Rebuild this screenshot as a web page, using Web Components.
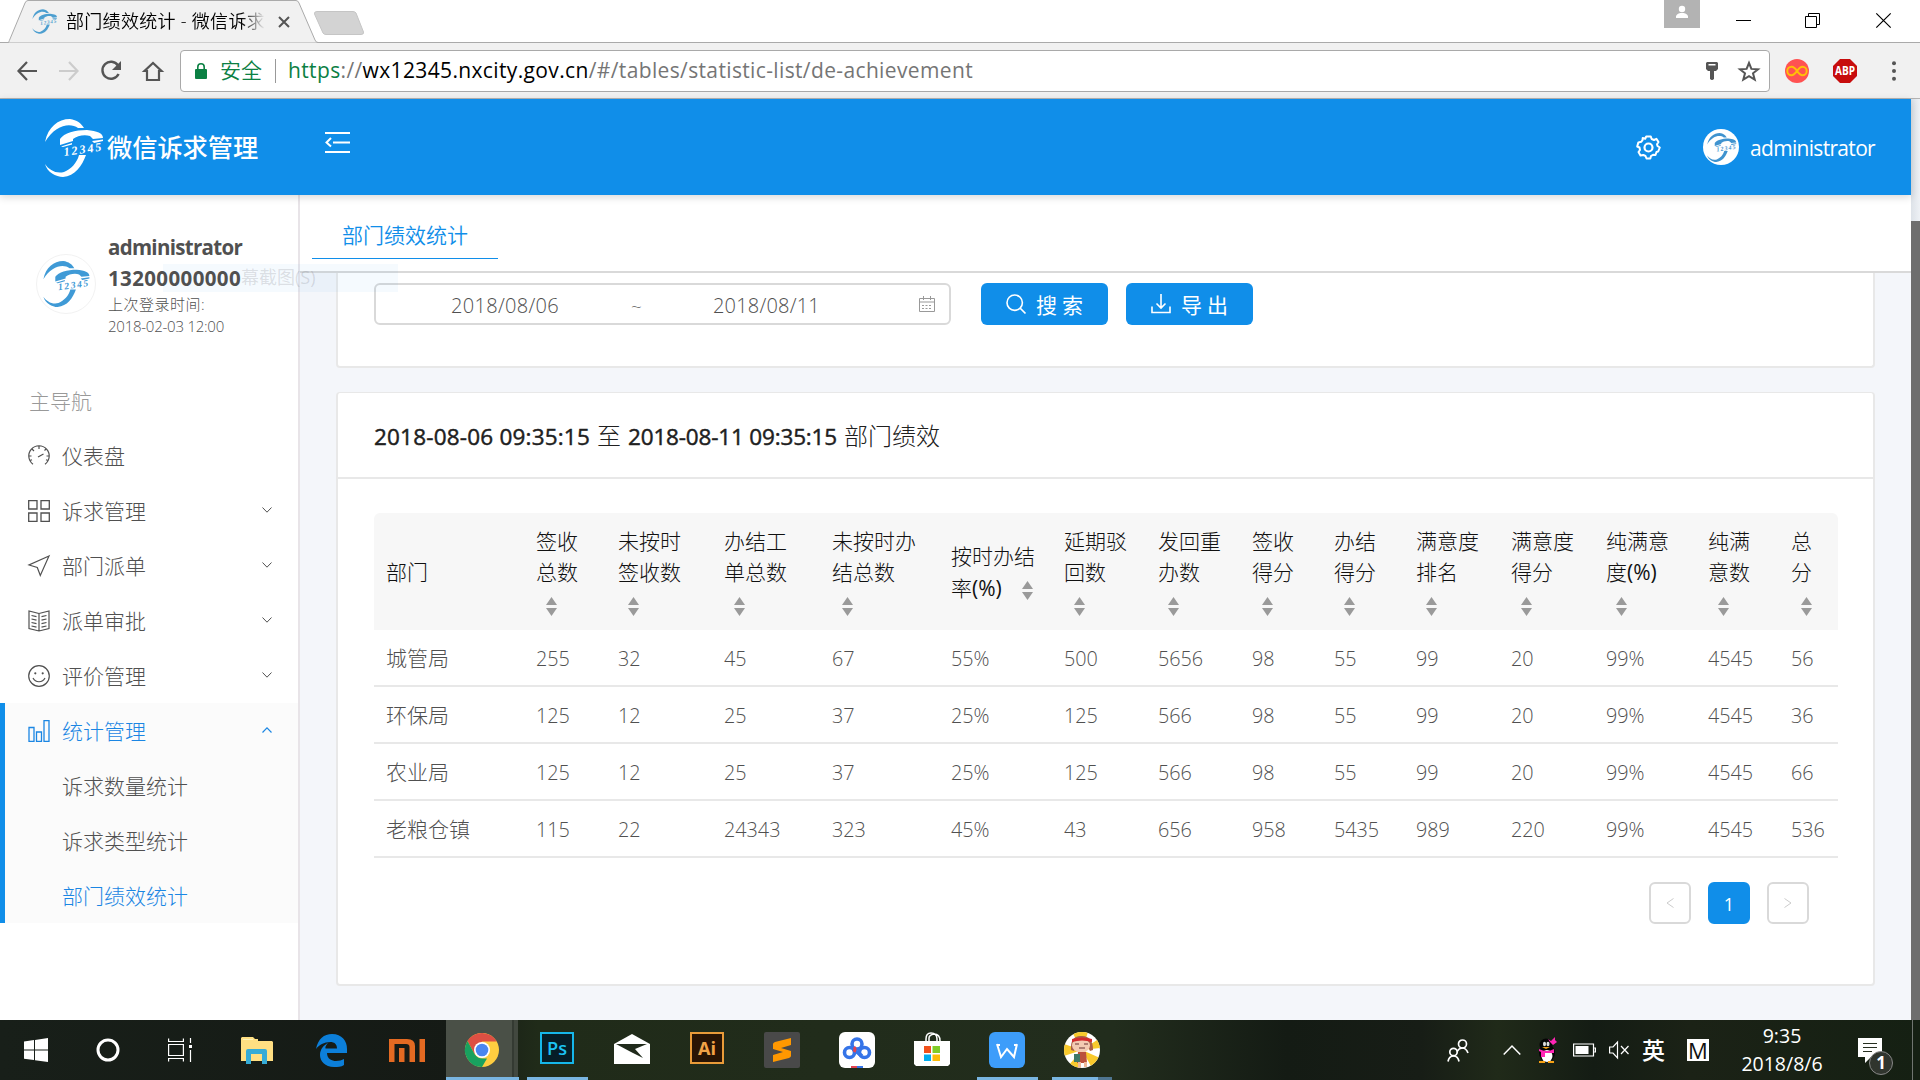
<!DOCTYPE html>
<html lang="zh-CN">
<head>
<meta charset="utf-8">
<title>部门绩效统计 - 微信诉求管理</title>
<style>
html,body{margin:0;padding:0;width:1920px;height:1080px;overflow:hidden;background:#fff}
body{font-family:"Open Sans","Noto Sans CJK SC",sans-serif;font-size:21px;color:#505050}
</style>
</head>
<body>
<desktop-screen></desktop-screen>
<script>
const def=(name,html,init)=>{
  const t=document.createElement('template');t.innerHTML=html;
  customElements.define(name,class extends HTMLElement{
    constructor(){super();this.attachShadow({mode:'open'}).append(t.content.cloneNode(true));}
    connectedCallback(){if(init&&!this.ready){this.ready=true;init.call(this,this.shadowRoot);}}
  });
};
const LOGO='<path fill="currentColor" d="M1 23C4 8 14 0 26 0C33 1 37 4 40 9H34C26 3 11 6 1 23zM16 26V20C20 14 31 11 43 11C53 12 59 14 59 19L49 20L46 17C40 15 33 17 29 20V22zM48 22L59 20.500V22L50 24zM17 27.500L28 24V25.500L19 28zM1 45C3 53 12 58 19 58C31 57 38 47 42 36H35C33 44 27 50 20 53C12 55 5 51 1 45z"/><text transform="rotate(-8 20 36)" x="20" y="37" textLength="38" fill="currentColor" font-family="Liberation Serif,serif" font-style="italic" font-weight="700" font-size="12">12345</text>';
/* each entry: [viewBox, markup] */
const S='fill="none" stroke="currentColor" ';
const ICONS={
logo:['0 0 59 58',LOGO],
back:['0 0 20 20','<path '+S+'stroke-width="2.200" d="M20 10H2M10 1L1.500 10L10 19"/>'],
fwd:['0 0 20 20','<path '+S+'stroke-width="2.200" d="M0 10H18M10 1L18.500 10L10 19"/>'],
reload:['0 0 22 20','<path '+S+'stroke-width="2.400" d="M18 4.500A8.500 8.500 0 1 0 18.600 13"/><path fill="currentColor" d="M21 0V9H12z"/>'],
home:['0 0 20 20','<path '+S+'stroke-width="2.200" d="M4 19V10H1.500L10 2L18.500 10H16V19z"/>'],
lock:['0 0 12 16','<rect y="6" width="12" height="10" rx="1" fill="currentColor"/><path '+S+'stroke-width="1.600" d="M2.800 7V4a3.200 3.200 0 0 1 6.400 0V7"/>'],
key:['0 0 12 18','<path fill="currentColor" fill-rule="evenodd" d="M1 0H11L12 1V7L10 9H8V17L6.500 18H5.500L4 17V9H2L0 7V1zM2.500 2V3.500H9.500V2z"/>'],
star:['0 0 22 20','<path '+S+'stroke-width="2" d="M11 2L13.400 7.900L20 8.300L15 12.300L16.700 18.500L11 15.100L5.300 18.500L7 12.300L2 8.300L8.600 7.900z"/>'],
inf:['0 0 24 24','<circle cx="12" cy="12" r="12" fill="#ff5252"/><path fill="none" stroke="#ffc107" stroke-width="2" d="M12 12C9 7.500 7.500 7.800 6.500 7.800a4.200 4.200 0 0 0 0 8.400C9 16.200 10.500 14 12 12S15 7.800 17.500 7.800a4.200 4.200 0 0 1 0 8.400C15 16.200 13.500 14 12 12z"/>'],
abp:['0 0 24 24','<path fill="#c70d0d" d="M7 0H17L24 7V17L17 24H7L0 17V7z"/><text x="2" y="16.200" textLength="20" lengthAdjust="spacingAndGlyphs" font-size="12" font-weight="700" font-family="Open Sans,sans-serif" fill="#fff">ABP</text>'],
dots:['0 0 4 20','<g fill="currentColor"><circle cx="2" cy="2.300" r="2"/><circle cx="2" cy="10" r="2"/><circle cx="2" cy="17.700" r="2"/></g>'],
user:['0 0 36 28','<circle cx="18" cy="9" r="3.200" fill="#fff"/><path fill="#fff" d="M12 18V16C13 13.500 16 13 18 13S23 13.500 24 16V18z"/>'],
x:['0 0 12 12','<path '+S+'stroke-width="2" d="M1 1L11 11M11 1L1 11"/>'],
wmin:['0 0 15 15','<path '+S+'d="M0 7.500H15"/>'],
wmax:['0 0 15 15','<path '+S+'d="M.5 3.500H11.500V14.500H.5zM3.500 3V.5H14.500V11.500H12"/>'],
wclose:['0 0 15 15','<path '+S+'stroke-width="1.200" d="M.3 .3L14.700 14.700M14.700 .3L.3 14.700"/>'],
fold:['0 0 25 21','<path '+S+'stroke-width="2" d="M0 1H25M8 10.500H25M0 20H25M6 6L1.500 10.500L6 14.500"/>'],
gear:['0 0 25 25','<path '+S+'stroke-width="2" stroke-linejoin="round" d="M10.200 1.500H14.800L15.600 4L18 5L20.400 3.900L22.500 7L21 9.200L21.500 11L23.800 12.500L22.200 16.500L20.500 17L19.500 20L17 19.800L15 21L14.300 23.500H10.500L9.500 21L7.300 19.900L4.500 20.500L2.500 17L4 15L3.500 12.500L1.200 11.500L2.400 7.400L5.200 6.800L6.500 5.200L6.700 3L9.200 3.800z"/><circle cx="12.500" cy="12.500" r="4" '+S+'stroke-width="2.200"/>'],
dash:['0 0 22 22','<path '+S+'stroke-width="1.200" d="M5 19.200A10.200 10.200 0 1 1 17 19.200M11 1V4M1 11H3.500M21 11H18.500M4 4L6 6M18 4L16.500 5.500M10 12L15.500 9M2 15.500L4 14.700M20 15.500L18 14.700"/>'],
grid:['0 0 22 22','<path '+S+'stroke-width="1.300" d="M.7 .7H9V9H.7zM13 .7H21.300V9H13zM.7 13H9V21.300H.7zM13 13H21.300V21.300H13z"/>'],
send:['0 0 22 22','<path '+S+'stroke-width="1.200" d="M21 1L1 10L9.300 12.500L12.300 20.500z"/>'],
book:['0 0 22 22','<path '+S+'stroke-width="1.200" d="M11 3.500L1 1V18.500L11 21L21 18.500V1zM11 3.500V21M3.500 5.500L8.500 6.700M3.500 9L8.500 10.200M3.500 12.500L8.500 13.700M18.500 5.500L13.500 6.700M18.500 9L13.500 10.200M18.500 12.500L13.500 13.700M3.500 16L8.500 17.200M18.500 16L13.500 17.200"/>'],
smile:['0 0 22 22','<circle cx="11" cy="11" r="10.300" '+S+'stroke-width="1.200"/><circle cx="7.300" cy="8.300" r="1.100" fill="currentColor"/><circle cx="14.700" cy="8.300" r="1.100" fill="currentColor"/><path '+S+'stroke-width="1.200" d="M5 13C7.500 18 14.500 18 17 13"/>'],
bars:['0 0 22 22','<path '+S+'stroke-width="1.300" d="M1 7.500H6V21.300H1zM8.500 12H13.500V21.300H8.500zM16 .7H21V21.300H16z"/>'],
down:['0 0 10 6','<path '+S+'stroke-width="1" d="M.5 .5L5 5.200L9.500 .5"/>'],
up:['0 0 10 6','<path '+S+'stroke-width="1.200" d="M.5 5.500L5 .8L9.500 5.500"/>'],
left:['0 0 8 10','<path '+S+'d="M7.500 .5L1 5L7.500 9.500"/>'],
right:['0 0 8 10','<path '+S+'d="M.5 .5L7 5L.5 9.500"/>'],
cal:['0 0 16 16','<path '+S+'d="M.5 2.500H15.500V15.500H.5zM.5 6H15.500M4.500 0V4M11.500 0V4"/><path '+S+'stroke-dasharray="2 1.500" d="M3 9.500H13M3 12.500H13"/>'],
search:['0 0 20 20','<circle cx="8.700" cy="8.700" r="7.700" '+S+'stroke-width="1.600"/><path '+S+'stroke-width="1.700" d="M14 14L19.500 19.500"/>'],
dl:['0 0 20 20','<path '+S+'stroke-width="1.600" d="M10 0V14M5.500 9.500L10 14L14.500 9.500M1 12.500V18.500H19V12.500"/>'],
sort:['0 0 11 21','<path fill="#9a9a9a" d="M5.500 1L11 9H0zM5.500 20L11 12H0z"/>'],
win:['0 0 24 24','<path fill="#fff" d="M0 3.500L10 2V11.500H0zM11 1.900L24 0V11.500H11zM0 12.500H10V22L0 20.700zM11 12.500H24V24L11 22.200z"/>'],
cort:['0 0 24 24','<circle cx="12" cy="12" r="10" fill="none" stroke="#fff" stroke-width="3"/>'],
task:['0 0 24 24','<path fill="none" stroke="#fff" stroke-width="1.200" d="M.6 .5V3.500H15.400V.5M.6 6.500H15.400V17.500H.6zM.6 23.500V20.500H15.400V23.500M22.500 0V5M22.500 12V24"/><path fill="#fff" d="M21 7H24V10H21z"/>'],
folder:['0 0 32 28','<path fill="#ffdf82" d="M1 1H12L14 3H17V5H31L32 6V25H0V2z"/><path fill="#fff3b8" d="M2 3H12V4H2z"/><path fill="#35abd6" d="M5 15Q5 13 7 13H24Q26 13 26 15V28H21V18H10V28H5z"/>'],
edge:['0 0 31 33','<path fill="#0c7fd9" d="M0 15C2 5 8 0 16 0C26 0 31 7 31 15V19H11C11 25 16 27 20 27C23 27 26 26 28 25V31C25 33 22 33 18 33C9 33 4 27 4 21C4 15 8 11 12 9C10 11 9 13 9.500 14.500H21C21 10 18 8 14.500 8C8 8 3 11 0 15z"/>'],
mi:['0 0 36 23','<path fill="#e46a22" d="M0 0H18Q26 0 26 7V23H20.500V8Q20.500 5 17 5H5.500V23H0zM10 9H15.500V23H10zM30.500 0H36V23H30.500z"/>'],
chrome:['0 0 34 34','<circle cx="17" cy="17" r="17" fill="#ffcd40"/><path fill="#dd4f43" d="M2.500 8A17 17 0 0 1 31.700 8.500H17L9.600 21z"/><path fill="#19a15f" d="M2.500 8L9.700 21.300Q12.500 25.500 17.500 25.500H22L17 34A17 17 0 0 1 2.500 8z"/><circle cx="17" cy="17" r="8" fill="#fff"/><circle cx="17" cy="17" r="6.300" fill="#4a86f0"/>'],
ps:['0 0 34 32','<path fill="#061e28" stroke="#16b7ea" stroke-width="2" d="M1 1H33V31H1z"/><text x="7" y="22.500" font-size="18" textLength="20" lengthAdjust="spacingAndGlyphs" font-family="Open Sans,sans-serif" font-weight="600" fill="#1cc3f3">Ps</text>'],
mail:['0 0 36 30','<path fill="#fff" d="M0 10L18 0L36 10V30H0z"/><path fill="#202a1b" d="M2 10H33L21 15L29 24L17 18z"/>'],
ai:['0 0 34 32','<path fill="#291404" stroke="#e99b39" stroke-width="2" d="M1 1H33V31H1z"/><text x="8" y="22.500" font-size="18" textLength="18" lengthAdjust="spacingAndGlyphs" font-family="Open Sans,sans-serif" font-weight="700" fill="#f2a347">Ai</text>'],
sub:['0 0 36 36','<rect width="36" height="36" rx="2" fill="#494949"/><path fill="#ff9800" d="M9 12Q9 11 11 10L27 6V13L17 16L27 19V24Q27 25 25 26L9 30V23L19 20L9 17z"/>'],
baidu:['0 0 36 36','<rect width="36" height="36" rx="6" fill="#fff"/><g fill="none" stroke="#3574e8" stroke-width="3.600"><circle cx="18" cy="12" r="5"/><circle cx="10.500" cy="20.500" r="5"/><circle cx="25.500" cy="20.500" r="5"/><path d="M14 17L23 24"/></g><path fill="none" stroke="#e34350" stroke-width="3" d="M15 15Q17 17 15 20"/><path fill="#e34350" d="M12 34H18V36H12z"/><path fill="#3574e8" d="M18 34H24V36H18z"/>'],
store:['0 0 36 34','<path fill="none" stroke="#fff" stroke-width="1.500" d="M12 10V7Q12 1 17 1Q23 1 23 7V10M15 9V6Q15 3 20 2Q26 2 26 9"/><path fill="#fff" d="M0 9H36V32L34 34H2L0 32z"/><path fill="#f1511b" d="M10 14H17V21H10z"/><path fill="#80cc28" d="M18.500 14H26V21H18.500z"/><path fill="#00adef" d="M10 22.500H17V29H10z"/><path fill="#fbbc09" d="M18.500 22.500H26V29H18.500z"/>'],
wps:['0 0 36 36','<rect width="36" height="36" rx="6" fill="#3d9dfa"/><path fill="none" stroke="#fff" stroke-width="2" d="M8 12L12 25L18 17L25 25L28 12M8 13H11M25 13H28"/>'],
girl:['0 0 36 36','<clipPath id="c"><circle cx="18" cy="18" r="18"/></clipPath><g clip-path="url(#c)"><path fill="#fff" d="M0 0H36V36H0z"/><path fill="#f8c92c" d="M18 18L8 0H24zM18 18L36 6V16zM18 18L36 26L28 36zM18 18L16 36L4 34zM18 18L0 24V12z"/><path fill="#aa6048" d="M7 18Q6 3 18 4Q29 4 29 18L26 19L24 15H12L10 19z"/><ellipse cx="17" cy="13.500" rx="9" ry="7" fill="#f3cbb2"/><path fill="#d42b2d" d="M8 7Q18 4 28 7V10Q18 7 8 10z"/><path fill="none" stroke="#6b3434" d="M11 12H15M20 12H24M15 16H21"/><path fill="#ba513d" d="M14 20H22L23 31H13z"/><path fill="#3e7868" d="M10 22H16V30H10z"/><path fill="#efb999" d="M14 30H17V36H14zM20 30H23V35H20z"/></g>'],
people:['0 0 22 23','<g fill="none" stroke="#fff" stroke-width="1.700"><circle cx="15.500" cy="5" r="4"/><circle cx="6.500" cy="13" r="3.700"/><path d="M1 22.500Q2 17 6.500 17T12 22.500M10 12.500Q12 9 15.500 9T21 14"/></g>'],
caret:['0 0 18 10','<path fill="none" stroke="#fff" stroke-width="1.500" d="M.7 9.500L9 1L17.300 9.500"/>'],
qq:['0 0 20 26','<ellipse cx="10" cy="16" rx="8" ry="9" fill="#050505"/><circle cx="9" cy="8" r="6.500" fill="#050505"/><ellipse cx="10" cy="19" rx="5.500" ry="6" fill="#fff"/><path fill="#ff25b5" d="M2 12Q10 16 17 12V16H8V20H4V15L2 14zM11 2L14 4L18 0V3L20 5L16 8L13 5z"/><ellipse cx="7.500" cy="7" rx="1.500" ry="2.200" fill="#ddd"/><ellipse cx="11" cy="7" rx="1.500" ry="2.200" fill="#ddd"/><path fill="#f5a014" d="M5 10H13L9 12zM2 24H8V26H2zM11 24H17V26H11z"/>'],
bat:['0 0 23 14','<path fill="none" stroke="#fff" stroke-width="1.200" d="M.6 1H20.500V13H.6zM21.200 5H22.400V9H21.200"/><path fill="#fff" d="M2.500 3H15.500V11H2.500z"/>'],
mute:['0 0 20 18','<path fill="none" stroke="#fff" stroke-width="1.200" d="M.6 6H4L8.500 1V17L4 12H.6zM12 5L19.500 13M19.500 5L12 13"/>'],
note:['0 0 24 25','<path fill="#fff" d="M0 0H24V19H13L7 25V19H0z"/><path stroke="#273021" d="M5 5.500H19M5 9.500H19M5 13.500H14"/>']
};
def('ui-icon','<style>:host{display:block;flex:none;line-height:0}svg{display:block;width:100%;height:100%;overflow:visible}</style><svg></svg>',function(r){
  const i=ICONS[this.getAttribute('name')],s=r.querySelector('svg');
  s.setAttribute('viewBox',i[0]);s.innerHTML=i[1];
  this.style.width=(this.getAttribute('w')||i[0].split(' ')[2])+'px';
  this.style.height=(this.getAttribute('h')||i[0].split(' ')[3])+'px';
});
/* single-line label tracked to a given width */
def('fit-text','<style>:host{display:block;flex:none;white-space:pre}span{display:inline-block}</style><span><slot></slot></span>',function(r){
  const w=+this.getAttribute('w'),s=r.querySelector('span');
  if(!w)return;
  const n=[...this.textContent].length,nat=s.getBoundingClientRect().width;
  s.style.letterSpacing=((w-nat)/n)+'px';this.style.width=w+'px';
});
def('browser-tabs',`<style>
:host{display:flex;height:42px;background:#fff;border-bottom:1px solid #aaa;flex:none;box-sizing:content-box;position:relative;color:#000}
.tab{margin-left:8px;width:310px;height:43px;flex:none;margin-bottom:-1px;display:grid}
.tab>*{grid-area:1/1}
.in{display:flex;align-items:center;padding:0 0 0 24px;font-size:18px;height:43px}
.ttl{width:198px;margin-left:9px;overflow:hidden;-webkit-mask-image:linear-gradient(90deg,#000 88%,transparent);mask-image:linear-gradient(90deg,#000 88%,transparent);line-height:30px;margin-top:-1px;font-weight:350}
.in .x{margin-left:13px;color:#555}
.sp{flex:1}.new{margin:11px 0 0 -4px}
.w{display:flex}.w ui-icon{margin-top:13px}
</style><div class="tab"><svg width="310" height="43"><path fill="#f1f1f1" stroke="#aaa" d="M0 42.500C1 42.500 1 41 2 39L17 3Q18 .5 20 .5H288Q290 .5 291 3L307 40Q308 42.500 310 42.500"/></svg>
<div class="in"><ui-icon name="logo" w="25" h="25" style="color:#4d9fd0"></ui-icon><fit-text class="ttl" w="199">部门绩效统计 - 微信诉求</fit-text><ui-icon class="x" name="x" w="12" h="12"></ui-icon></div></div>
<svg class="new" width="50" height="24"><path fill="#d3d3d3" stroke="#c5c5c5" d="M3 .5H39Q41 .5 42 2L49.500 21Q50 23.500 47 23.500H12Q10 23.500 9 22L.5 3Q0 .5 3 .5z"/></svg>
<div class="sp"></div><ui-icon name="user" style="background:#b3b3b3"></ui-icon>
<div class="w"><ui-icon name="wmin" style="margin-left:36px"></ui-icon><ui-icon name="wmax" style="margin-left:54px"></ui-icon><ui-icon name="wclose" style="margin:13px 29px 0 56px"></ui-icon></div>`);
def('browser-bar',`<style>
:host{display:flex;align-items:center;height:55px;background:#f1f1f1;border-bottom:1px solid #b3b3b3;flex:none;color:#555;padding:0}
.box{margin-left:17px;width:1588px;height:40px;border:1px solid #a9a9a9;border-radius:4px;background:#fff;display:flex;align-items:center;font-size:21px}
.sec{color:#0b8043;margin-left:14px}.d{width:1px;height:24px;background:#999;margin:0 12px 0 13px}
b{font-weight:400;color:#000}i{font-style:normal;color:#0b8043}.sp{flex:1}fit-text{line-height:30px;margin-top:-2px}
</style><ui-icon name="back" style="margin-left:17px"></ui-icon><ui-icon name="fwd" style="margin-left:22px;color:#ccc"></ui-icon><ui-icon name="reload" style="margin-left:21px"></ui-icon><ui-icon name="home" style="margin-left:21px"></ui-icon>
<div class="box"><ui-icon name="lock" class="sec"></ui-icon><fit-text style="color:#0b8043;margin-left:13px;width:42px;font-weight:350">安全</fit-text><div class="d"></div><fit-text w="685" style="color:#757575"><i>https</i>://<b>wx12345.nxcity.gov.cn</b>/#/tables/statistic-list/de-achievement</fit-text><div class="sp"></div><ui-icon name="key"></ui-icon><ui-icon name="star" style="margin:0 9px 0 20px"></ui-icon></div>
<ui-icon name="inf" style="margin-left:15px"></ui-icon><ui-icon name="abp" style="margin-left:24px"></ui-icon><ui-icon name="dots" style="margin-left:35px"></ui-icon>`);
def('app-header',`<style>
:host{display:flex;align-items:center;height:96px;background:#108ee9;color:#fff;flex:none;box-shadow:0 2px 8px rgba(0,0,0,.16);position:relative;z-index:2}
.t{font-size:25.200px;font-weight:500;margin:-2px 0 0 4px;width:152px}.sp{flex:1}
.av{width:36px;height:36px;border-radius:50%;background:#fff;display:flex;align-items:center;justify-content:center;color:#3f93cf;margin:0 12px 0 42px}
</style><ui-icon name="logo" style="margin:2px 0 0 44px"></ui-icon><fit-text class="t">微信诉求管理</fit-text><ui-icon name="fold" style="margin:-9px 0 0 66px"></ui-icon><div class="sp"></div>
<ui-icon name="gear"></ui-icon><div class="av"><ui-icon name="logo" w="31" h="29"></ui-icon></div><fit-text w="125" style="margin:2px 36px 0 -1px;font-size:21px">administrator</fit-text>`);
def('user-card',`<style>
:host{display:flex;height:180px;box-sizing:border-box;padding:37px 0 0 36px}
.av{width:58px;height:58px;border:1px solid #f2f2f2;border-radius:50%;display:flex;align-items:center;justify-content:center;color:#3f9ad6;margin-top:22px}
.c{margin-left:12px;position:relative;z-index:3}.n{font-weight:700;line-height:31px;font-size:20.500px}.s{line-height:22px;font-size:15px;font-weight:300;margin-top:-1px}.s+.s{margin-top:0}
</style><div class="av"><ui-icon name="logo" w="48" h="46"></ui-icon></div><div class="c"><fit-text class="n" w="134">administrator</fit-text><fit-text class="n" w="133">13200000000</fit-text><div class="s"><fit-text w="97">上次登录时间:</fit-text></div><div class="s"><fit-text w="116">2018-02-03 12:00</fit-text></div></div>`);
def('nav-item',`<style>
:host{display:flex;align-items:center;height:55px;padding-left:28px;box-sizing:border-box;font-weight:300}
:host([active]){color:#1b86e3}:host([open]){padding-left:23px}:host([sub]){padding-left:57px}
.t{flex:1;margin-left:12px;line-height:32px}:host([sub]) .t{margin-left:0}
.a{margin:-2px 26px 0 0}
</style><span class="i"></span><div class="t"><slot></slot></div><span class="k"></span>`,function(r){
  const i=this.getAttribute('icon'),a=this.getAttribute('arrow');
  if(i)r.querySelector('.i').innerHTML='<ui-icon name="'+i+'"></ui-icon>';
  if(a)r.querySelector('.k').innerHTML='<ui-icon class="a" name="'+a+'"></ui-icon>';
});
def('side-bar',`<style>
:host{display:flex;flex-direction:column;width:298px;border-right:2px solid #e8e4e8;background:#fff;flex:none}
.h{color:#999;font-weight:300;height:55px;line-height:53px;padding-left:29px;margin-bottom:-2px}
.g{border-left:5px solid #108ee9;background:#fbfbfb}
</style><user-card></user-card><div class="h">主导航</div>
<nav-item icon="dash">仪表盘</nav-item><nav-item icon="grid" arrow="down">诉求管理</nav-item><nav-item icon="send" arrow="down">部门派单</nav-item><nav-item icon="book" arrow="down">派单审批</nav-item><nav-item icon="smile" arrow="down">评价管理</nav-item>
<div class="g"><nav-item open active icon="bars" arrow="up">统计管理</nav-item><nav-item sub>诉求数量统计</nav-item><nav-item sub>诉求类型统计</nav-item><nav-item sub active>部门绩效统计</nav-item></div>`);
def('page-tabs',`<style>:host{display:flex;height:76px;border-bottom:2px solid #d9d9d9;background:#fff;padding-left:12px;flex:none}
div{width:186px;height:63px;border-bottom:1px solid #108ee9;color:#108ee9;line-height:80px;text-align:center;box-sizing:content-box;padding-left:0;font-weight:350}</style><div>部门绩效统计</div>`);
def('date-range',`<style>:host{display:flex;align-items:center;width:573px;height:38px;border:2px solid #d9d9d9;border-radius:6px;background:#fff;font-size:20px;font-weight:300}
fit-text{line-height:30px;padding-top:4px}</style><fit-text w="108" style="margin-left:75px">2018/08/06</fit-text><fit-text w="12" style="margin-left:72px;color:#777;font-size:19px">~</fit-text><fit-text w="107" style="margin-left:70px">2018/08/11</fit-text><ui-icon name="cal" style="margin-left:99px;color:#999"></ui-icon>`);
def('ui-button',`<style>:host{display:flex;align-items:center;width:127px;height:42px;border-radius:6px;background:#108ee9;color:#fff;box-sizing:border-box;padding-left:25px;flex:none}
span{letter-spacing:5px;margin-left:10px;padding-top:1px;line-height:30px}</style><i></i><span><slot></slot></span>`,function(r){
  const u=document.createElement('ui-icon');u.setAttribute('name',this.getAttribute('icon'));r.querySelector('i').replaceWith(u);
});
def('filter-card',`<style>:host{display:flex;align-items:flex-start;height:95px;box-sizing:border-box;padding:10px 0 0 36px;background:#fff;border:2px solid #e8e8e8;border-top:0;border-radius:0 0 4px 4px;width:1539px;flex:none}
</style><date-range></date-range><ui-button icon="search" style="margin-left:30px">搜索</ui-button><ui-button icon="dl" style="margin-left:18px">导出</ui-button>`);
const W=[150,82,106,108,119,113,94,94,82,82,95,95,102,83,59];
const H=['部门','签收|总数','未按时|签收数','办结工|单总数','未按时办|结总数','按时办结|率(%)','延期驳|回数','发回重|办数','签收|得分','办结|得分','满意度|排名','满意度|得分','纯满意|度(%)','纯满|意数','总|分'];
const R=['城管局 255 32 45 67 55% 500 5656 98 55 99 20 99% 4545 56','环保局 125 12 25 37 25% 125 566 98 55 99 20 99% 4545 36','农业局 125 12 25 37 25% 125 566 98 55 99 20 99% 4545 66','老粮仓镇 115 22 24343 323 45% 43 656 958 5435 989 220 99% 4545 536'];
def('stat-table',`<style>:host{display:block;width:1464px}
.r{display:grid;grid-template-columns:${W.map(w=>w+'px').join(' ')};height:55px;border-bottom:2px solid #e8e8e8;align-items:center;font-weight:300}
.r>div{padding-left:12px;padding-top:2px;font-size:19.800px;white-space:nowrap}.r>div:first-child{font-size:21px;padding:0 0 2px 12px}
.h{height:117px;border:0;background:#f7f7f7;border-radius:6px 6px 0 0;align-items:start;color:#111;font-weight:300}
.h>div,.h>div:first-child{font-size:21px;line-height:31.500px;padding-top:12.500px}
.h>div:first-child{padding-top:44px}.h>div:nth-child(6){padding-top:28px}
.h ui-icon{margin:7px 0 0 10px}.l{display:flex}.l ui-icon{margin:7px 0 0 20px}.l b{font-weight:400}
</style><div class="t"></div>`,function(r){
  const pc=s=>s.replace('(%)','<span style="font-weight:400">(%)</span>');
  let h='<div class="r h">'+H.map((t,i)=>{
    const p=t.split('|').map(pc);
    if(i==5)return '<div>'+p[0]+'<div class="l"><div>'+p[1]+'</div><ui-icon name="sort"></ui-icon></div></div>';
    return '<div>'+p.join('<br>')+(i?'<ui-icon name="sort"></ui-icon>':'')+'</div>';
  }).join('')+'</div>';
  R.forEach(x=>h+='<div class="r">'+x.split(' ').map(c=>'<div>'+c+'</div>').join('')+'</div>');
  r.querySelector('.t').innerHTML=h;
});
def('page-nav',`<style>:host{display:flex;justify-content:flex-end;gap:17px;padding:24px 64px 0 0}
div{width:42px;height:42px;box-sizing:border-box;border:2px solid #d9d9d9;border-radius:6px;display:flex;align-items:center;justify-content:center;color:#ccc;font-size:18px}
.on{background:#108ee9;border-color:#108ee9;color:#fff;padding-top:2px}</style><div><ui-icon name="left"></ui-icon></div><div class="on">1</div><div><ui-icon name="right"></ui-icon></div>`);
def('result-card',`<style>:host{display:block;width:1539px;height:594px;box-sizing:border-box;margin-top:24px;background:#fff;border:2px solid #e8e8e8;border-top-width:1px;border-radius:4px;flex:none}
.h{height:86px;border-bottom:2px solid #e8e8e8;display:flex;align-items:center;padding:1px 0 0 36px;color:#202020;box-sizing:border-box;font-size:24px;font-weight:300;line-height:34px}
stat-table{margin:34px 0 0 36px}fit-text+fit-text{margin-left:7px}.l{font-weight:400;-webkit-text-stroke:.45px #202020;font-size:22.500px;padding-top:2px}</style>
<div class="h"><fit-text class="l" w="216">2018-08-06 09:35:15</fit-text><fit-text>至</fit-text><fit-text class="l" w="209">2018-08-11 09:35:15</fit-text><fit-text>部门绩效</fit-text></div><stat-table></stat-table><page-nav></page-nav>`);
def('app-main',`<style>:host{display:flex;flex:1;flex-direction:column;background:#f4f6fa;min-width:0}.p{padding-left:36px;display:flex;flex-direction:column}</style><page-tabs></page-tabs><div class="p"><filter-card></filter-card><result-card></result-card></div>`);
/* fading highlight of a context-menu entry */
def('menu-ghost',`<style>:host{position:absolute;left:163px;top:165px;width:235px;height:28px;background:rgba(60,150,245,.05);font-size:18px;line-height:27px;color:rgba(80,80,90,.17);padding-left:78px;box-sizing:border-box;white-space:nowrap;z-index:2}</style>幕截图(S)`);
def('app-page',`<style>:host{display:flex;height:921px;flex:none}.a{width:1911px;display:flex;flex-direction:column;position:relative}.b{display:flex;flex:1;min-height:0}
.s{width:9px;background:linear-gradient(90deg,#dde2e8,#eef1f5)}.s i{display:block;height:799px;margin-top:122px;background:#6e6e6e}</style>
<div class="a"><app-header></app-header><div class="b"><side-bar></side-bar><app-main></app-main></div><menu-ghost></menu-ghost></div><div class="s"><i></i></div>`);
def('task-app',`<style>:host{display:flex;width:75px;height:60px;align-items:center;justify-content:center;flex:none;position:relative;box-sizing:border-box}
i{display:none;position:absolute;bottom:0;left:8px;width:61px;height:3px;background:#79b5e1}:host([run]) i{display:block}
:host([run=chrome]){background:linear-gradient(90deg,transparent 2px,#4a5047 2px 68px,#343a32 68px 70px,#42483f 70px 74px,transparent 74px)}
:host([run=chrome]) i{left:2px;width:73px}:host([run=two]) i{width:46px;border-right:14px solid #4f7590}</style><i></i><slot></slot>`);
def('task-bar',`<style>:host{display:flex;height:60px;align-items:center;background:linear-gradient(90deg,#181f19 0,#151a15 24%,#202b19 28%,#222d1d 58%,#141b14 67%,#171d16 74%,#202a19 78%,#141c14 83%,#1b2216 88%,#152013 100%);color:#fff;flex:none;overflow:hidden}
.sp{flex:1}.m{width:22px;height:22px;background:#fff;color:#111;font:500 22px/23px "Open Sans",sans-serif;text-align:center;margin-left:21px}
.ck{width:120px;margin-left:13px;text-align:center;font-size:19.500px;line-height:28px;padding-bottom:1px}.n{position:relative;margin:0 36px 0 16px}
.n b{position:absolute;left:11px;top:13px;width:22px;height:22px;border:1px solid #888;border-radius:50%;background:#30352e;font-size:17px;line-height:22px;text-align:center}
.e{width:7px;border-left:1px solid #707570;height:60px;margin-left:-6px}</style>
<ui-icon name="win" style="margin-left:24px"></ui-icon><ui-icon name="cort" style="margin-left:48px"></ui-icon><ui-icon name="task" style="margin:0 27px 0 48px"></ui-icon>
<task-app><ui-icon name="folder"></ui-icon></task-app><task-app><ui-icon name="edge"></ui-icon></task-app><task-app><ui-icon name="mi"></ui-icon></task-app><task-app run="chrome"><ui-icon name="chrome"></ui-icon></task-app><task-app run><ui-icon name="ps" style="margin-top:-4px"></ui-icon></task-app><task-app><ui-icon name="mail" style="margin-top:-3px"></ui-icon></task-app><task-app><ui-icon name="ai" style="margin-top:-4px"></ui-icon></task-app><task-app><ui-icon name="sub"></ui-icon></task-app><task-app><ui-icon name="baidu"></ui-icon></task-app><task-app><ui-icon name="store" style="margin-top:-2px"></ui-icon></task-app><task-app run><ui-icon name="wps"></ui-icon></task-app><task-app run="two"><ui-icon name="girl"></ui-icon></task-app>
<div class="sp"></div><ui-icon name="people"></ui-icon><ui-icon name="caret" style="margin-left:34px"></ui-icon><ui-icon name="qq" style="margin:0 0 0 16px"></ui-icon><ui-icon name="bat" style="margin-left:16px"></ui-icon><ui-icon name="mute" style="margin-left:13px"></ui-icon><div style="margin-left:13px;width:24px;font-size:23px;font-weight:500;line-height:34px;margin-top:-1px">英</div><div class="m">M</div><div class="ck">9:35<br>2018/8/6</div><div class="n"><ui-icon name="note"></ui-icon><b>1</b></div><div class="e"></div>`);
def('desktop-screen',`<style>:host{display:flex;flex-direction:column;width:1920px;height:1080px;overflow:hidden}</style><browser-tabs></browser-tabs><browser-bar></browser-bar><app-page></app-page><task-bar></task-bar>`);
</script>
</body>
</html>
